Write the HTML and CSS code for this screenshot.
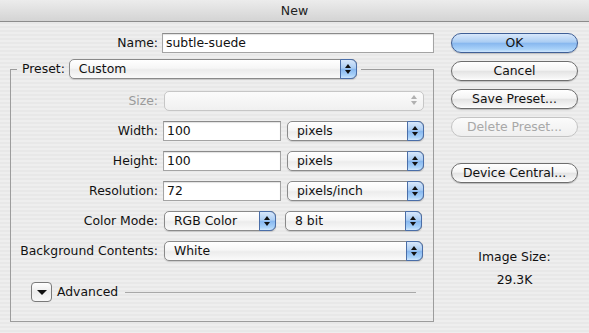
FILE: index.html
```html
<!DOCTYPE html>
<html lang="en">
<head>
    <meta charset="UTF-8">
    <title>New</title>
    <link rel="stylesheet" href="styles.css">
</head>
<body>
    <div class="window">
        <div class="titlebar">New</div>

        <div class="content">
            <!-- Left side: the form -->
            <div class="main">
                <div class="name-row">
                    <span class="label">Name:</span>
                    <div class="field name-field">subtle-suede</div>
                </div>

                <fieldset class="group">
                    <legend class="legend">
                        <span class="legend-label">Preset:</span>
                        <div class="popup preset-popup">Custom<span class="stepper"></span></div>
                    </legend>

                    <div class="form">
                        <span class="label disabled">Size:</span>
                        <div class="controls">
                            <div class="popup popup-disabled size-popup"><span class="stepper"></span></div>
                        </div>

                        <span class="label">Width:</span>
                        <div class="controls">
                            <div class="field num-field">100</div>
                            <div class="popup unit-popup">pixels<span class="stepper"></span></div>
                        </div>

                        <span class="label">Height:</span>
                        <div class="controls">
                            <div class="field num-field">100</div>
                            <div class="popup unit-popup">pixels<span class="stepper"></span></div>
                        </div>

                        <span class="label">Resolution:</span>
                        <div class="controls">
                            <div class="field num-field">72</div>
                            <div class="popup unit-popup">pixels/inch<span class="stepper"></span></div>
                        </div>

                        <span class="label">Color Mode:</span>
                        <div class="controls">
                            <div class="popup mode-popup">RGB Color<span class="stepper"></span></div>
                            <div class="popup unit-popup">8 bit<span class="stepper"></span></div>
                        </div>

                        <span class="label">Background Contents:</span>
                        <div class="controls">
                            <div class="popup bg-popup">White<span class="stepper"></span></div>
                        </div>
                    </div>

                    <div class="advanced">
                        <span class="disclosure"></span>
                        <span class="advanced-label">Advanced</span>
                        <span class="rule"></span>
                    </div>
                </fieldset>
            </div>

            <!-- Right side: buttons -->
            <div class="side">
                <div class="btn btn-default">OK</div>
                <div class="btn">Cancel</div>
                <div class="btn">Save Preset...</div>
                <div class="btn btn-disabled">Delete Preset...</div>
                <div class="btn btn-device">Device Central...</div>

                <div class="image-size">
                    <p>Image Size:</p>
                    <p>29.3K</p>
                </div>
            </div>
        </div>
    </div>
</body>
</html>
```

FILE: styles.css
```css
/* General */
body {
    margin: 0;
    font-family: 'DejaVu Sans', 'Lucida Grande', sans-serif;
    font-size: 12.4px;
    color: #111;
}

.window {
    width: 589px;
    height: 333px;
    overflow: hidden;
    background: repeating-linear-gradient(to bottom, #eeeeee 0, #eeeeee 2px, #e8e8e8 2px, #e8e8e8 4px);
}

/* Title bar */
.titlebar {
    height: 21px;
    line-height: 21px;
    text-align: center;
    font-size: 12.5px;
    color: #222;
    background: linear-gradient(to bottom, #ececec, #d4d4d4);
    border-bottom: 1px solid #8c8c8c;
}

.content {
    display: flex;
    padding: 11px 0 0 10px;
}

.main {
    width: 424px;
}

.label {
    text-align: right;
    line-height: 20px;
    white-space: nowrap;
}

.label.disabled {
    color: #9a9a9a;
}

/* Name row */
.name-row {
    display: flex;
    gap: 4px;
}

.name-row .label {
    width: 148px;
}

/* Text fields */
.field {
    box-sizing: border-box;
    height: 20px;
    line-height: 18px;
    padding: 0 3px;
    background: #fff;
    border: 1px solid #a4a4a4;
    border-top-color: #8a8a8a;
    box-shadow: inset 0 1px 1px rgba(0, 0, 0, 0.12);
}

.name-field {
    width: 272px;
}

.num-field {
    width: 118px;
}

/* Popup menus */
.popup {
    position: relative;
    box-sizing: border-box;
    height: 20px;
    line-height: 18px;
    padding: 0 0 0 9px;
    border: 1px solid #8a8a8a;
    border-radius: 5px;
    background: linear-gradient(to bottom, #ffffff 0%, #f6f6f6 45%, #ececec 55%, #fafafa 100%);
    box-shadow: 0 1px 1px rgba(0, 0, 0, 0.15);
}

.stepper {
    position: absolute;
    top: -1px;
    right: -1px;
    bottom: -1px;
    width: 17px;
    border: 1px solid #4a6ea8;
    border-radius: 0 6px 6px 0;
    box-sizing: border-box;
    background: linear-gradient(to bottom, #d8e8fb 0%, #abcdf3 45%, #88b8ef 52%, #a9d2f9 85%, #cfe6fc 100%);
}

.stepper::before,
.stepper::after {
    content: "";
    position: absolute;
    left: 4px;
    border-left: 3px solid transparent;
    border-right: 3px solid transparent;
}

.stepper::before {
    top: 4px;
    border-bottom: 4px solid #111;
}

.stepper::after {
    top: 10px;
    border-top: 4px solid #111;
}

.popup-disabled {
    border-color: #c6c6c6;
    box-shadow: none;
    background: linear-gradient(to bottom, #fbfbfb, #f0f0f0);
}

.popup-disabled .stepper {
    border: none;
    background: none;
}

.popup-disabled .stepper::before {
    border-bottom-color: #b0b0b0;
}

.popup-disabled .stepper::after {
    border-top-color: #b0b0b0;
}

.preset-popup { width: 288px; }
.size-popup { width: 260px; }
.unit-popup { width: 137px; }
.mode-popup { width: 112px; }
.bg-popup { width: 259px; }

/* Preset group box */
.group {
    margin: 6px 0 0;
    padding: 12px 0 19px;
    width: 424px;
    box-sizing: border-box;
    border: 1px solid #9c9c9c;
}

.legend {
    display: flex;
    align-items: center;
    gap: 4px;
    margin-left: 6px;
    padding: 0 4px 0 5px;
}

.legend-label {
    line-height: 20px;
}

.form {
    display: grid;
    grid-template-columns: 147px auto;
    column-gap: 5px;
    row-gap: 10px;
}

.controls {
    display: flex;
    gap: 6px;
}

.controls .popup {
    margin-left: 1px;
}

.controls .popup + .popup {
    margin-left: 3px;
}

.controls .field + .popup {
    margin-left: 0;
}

/* Advanced disclosure */
.advanced {
    display: flex;
    align-items: center;
    margin: 21px 0 0 20px;
}

.disclosure {
    position: relative;
    box-sizing: border-box;
    width: 21px;
    height: 20px;
    border: 1px solid #7a7a7a;
    border-radius: 4px;
    background: linear-gradient(to bottom, #ffffff, #ececec 50%, #f8f8f8);
}

.disclosure::after {
    content: "";
    position: absolute;
    top: 7px;
    left: 5px;
    border-left: 5px solid transparent;
    border-right: 5px solid transparent;
    border-top: 5px solid #111;
}

.advanced-label {
    margin-left: 5px;
    line-height: 20px;
}

.rule {
    flex: 1;
    height: 1px;
    margin: 0 17px 0 7px;
    background: #a8a8a8;
}

/* Buttons */
.side {
    display: flex;
    flex-direction: column;
    align-items: center;
    width: 127px;
    margin-left: 17px;
}

.btn {
    box-sizing: border-box;
    width: 127px;
    height: 20px;
    line-height: 18px;
    margin-bottom: 8px;
    text-align: center;
    border: 1px solid #6e6e6e;
    border-radius: 10px;
    background: linear-gradient(to bottom, #ffffff 0%, #f4f4f4 45%, #e4e4e4 52%, #f6f6f6 90%, #ffffff 100%);
    box-shadow: 0 1px 1px rgba(0, 0, 0, 0.2);
}

.btn-default {
    border-color: #3f5f96;
    background: linear-gradient(to bottom, #d8e8fb 0%, #abcdf3 45%, #88b8ef 52%, #a9d2f9 85%, #cfe6fc 100%);
}

.btn-disabled {
    color: #a8a8a8;
    border-color: #c4c4c4;
    box-shadow: none;
    background: linear-gradient(to bottom, #fbfbfb, #efefef);
}

.btn-device {
    margin-top: 18px;
}

.image-size {
    margin-top: 59px;
    text-align: center;
}

.image-size p {
    margin: 0 0 9px;
    line-height: 14px;
}
```
